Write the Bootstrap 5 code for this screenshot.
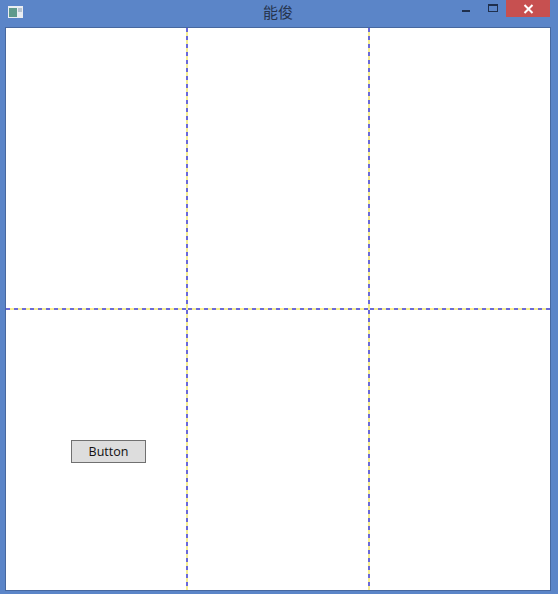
<!DOCTYPE html>
<html lang="zh">
<head>
  <meta charset="UTF-8" />
  <title>能俊</title>
  <link href="https://cdn.jsdelivr.net/npm/bootstrap@5.3.3/dist/css/bootstrap.min.css" rel="stylesheet" />
  <style>
    html, body { height: 100%; }
    body { background: #5b85c8; overflow: hidden; }
    .win-frame { width: 558px; height: 594px; padding: 0 7px 3px 5px; }
    .win-title { height: 27px; flex: none; }
    .win-icon { width: 15px; height: 12px; margin: 6px 0 0 3px; flex: none; }
    .win-name { left: 0; right: 0; top: 2px; text-align: center; font: 15px/20px "Noto Sans CJK SC", sans-serif; color: #26344e; }
    .win-min { width: 8px; height: 12px; margin-right: 18px; }
    .win-max { width: 10px; height: 12px; margin-right: 8px; }
    .win-close { width: 44px; height: 17px; margin-right: 1px; background: #c75050; }
    .win-client { background: #fff; border: 1px solid #47689f; flex: 1; display: grid; grid-template-columns: 182px 182px 1fr; grid-template-rows: 282px 1fr; }
    .grid-cell { position: relative; }
    .line-right { background: repeating-linear-gradient(to bottom, #6a6ad8 0 4px, #f6ee90 4px 8px) right top / 2px 100% no-repeat; }
    .line-bottom::after { content: ""; position: absolute; left: 0; right: 0; bottom: 0; height: 2px; background: repeating-linear-gradient(to right, #6a6ad8 0 4px, #f6ee90 4px 8px); }
    .win-button { width: 75px; height: 23px; margin: 130px 0 0 65px; padding: 0; background: #dddddd; border: 1px solid #707070; border-radius: 0; font: 12.5px/21px "Open Sans", sans-serif; color: #111; }
  </style>
</head>
<body>
  <div class="win-frame d-flex flex-column">
    <div class="win-title d-flex position-relative">
      <svg class="win-icon" viewBox="0 0 15 12">
        <rect width="15" height="12" fill="#e9edf2"/>
        <rect x="1" y="2" width="8" height="9" fill="#5f9a8c"/>
        <rect x="10" y="2" width="4" height="4" fill="#b8c4d0"/>
      </svg>
      <div class="win-name position-absolute">能俊</div>
      <div class="ms-auto d-flex align-items-start position-relative">
        <svg class="win-min" viewBox="0 0 8 12"><rect y="10" width="8" height="2" fill="#1f2f4d"/></svg>
        <svg class="win-max" viewBox="0 0 10 12"><rect x=".5" y="4.5" width="9" height="7" fill="none" stroke="#1f2f4d"/><rect y="4" width="10" height="2" fill="#1f2f4d"/></svg>
        <div class="win-close d-flex justify-content-center align-items-center">
          <svg width="11" height="10" viewBox="0 0 11 10"><path d="M1.5 1l8 8M9.5 1l-8 8" stroke="#fff" stroke-width="2" fill="none"/></svg>
        </div>
      </div>
    </div>
    <div class="win-client">
      <div class="grid-cell line-right line-bottom"></div>
      <div class="grid-cell line-right line-bottom"></div>
      <div class="grid-cell line-bottom"></div>
      <div class="grid-cell line-right"><button class="btn win-button" type="button">Button</button></div>
      <div class="grid-cell line-right"></div>
      <div class="grid-cell"></div>
    </div>
  </div>
</body>
</html>
